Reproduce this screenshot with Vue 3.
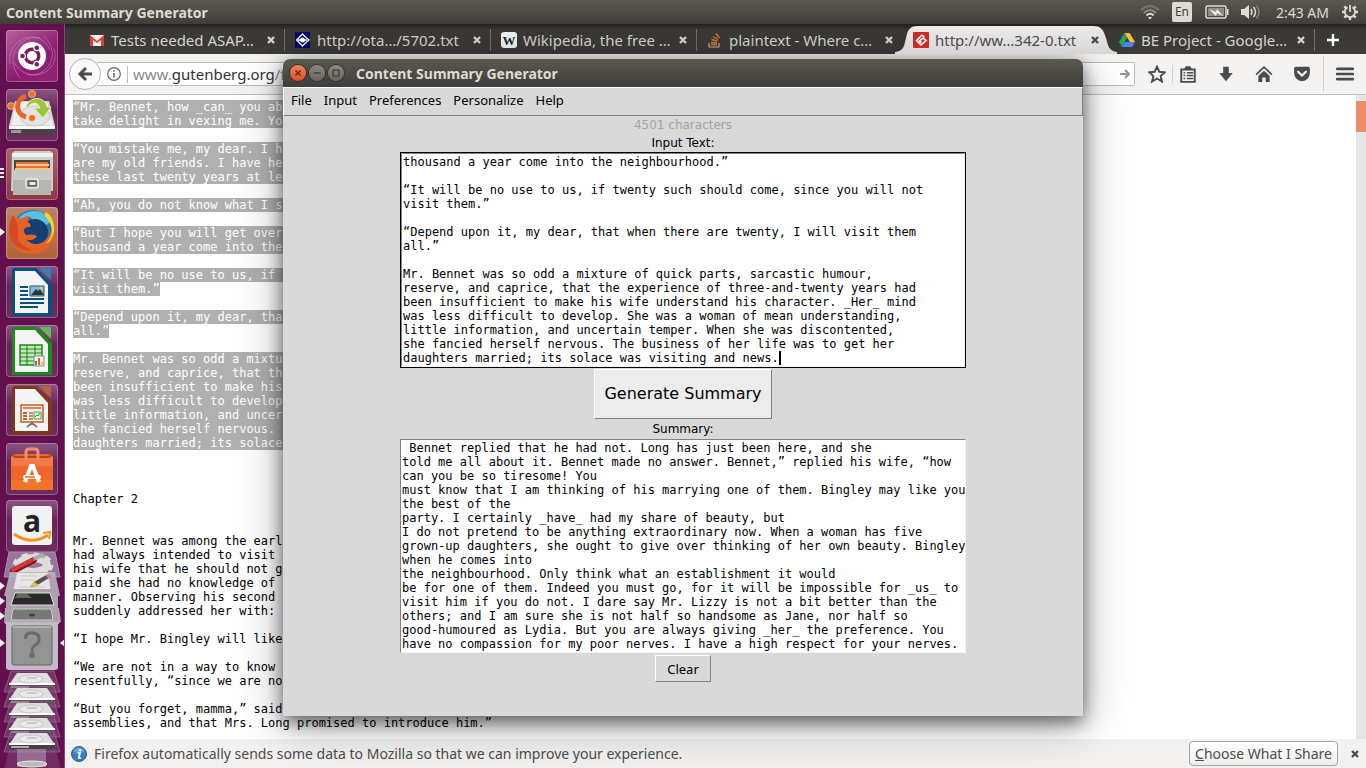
<script setup>
import { ref } from 'vue'

const tabs = [
  { icon: 'mail', title: 'Tests needed ASAP…' },
  { icon: 'ota', title: 'http://ota…/5702.txt' },
  { icon: 'wiki', title: 'Wikipedia, the free …' },
  { icon: 'stack', title: 'plaintext - Where c…' },
  { icon: 'gut', title: 'http://ww…342-0.txt', active: true },
  { icon: 'drive', title: 'BE Project - Google…' },
]

const menus = ['File', 'Input', 'Preferences', 'Personalize', 'Help']

const selected = `“Mr. Bennet, how _can_ you abu
take delight in vexing me. You

“You mistake me, my dear. I have a high respect for your nerves. They
are my old friends. I have heard you mention them with consideration
these last twenty years at least.”

“Ah, you do not know what I suffer.”

“But I hope you will get over it, and live to see many young men of four
thousand a year come into the neighbourhood.”

“It will be no use to us, if twenty such should come, since you will not
visit them.”

“Depend upon it, my dear, that when there are twenty, I will visit them
all.”

Mr. Bennet was so odd a mixture of quick parts, sarcastic humour,
reserve, and caprice, that the experience of three-and-twenty years had
been insufficient to make his wife understand his character. _Her_ mind
was less difficult to develop. She was a woman of mean understanding,
little information, and uncertain temper. When she was discontented,
she fancied herself nervous. The business of her life was to get her
daughters married; its solace was visiting and news.`.split('\n')

const following = `


Chapter 2


Mr. Bennet was among the earliest of those who waited on Mr. Bingley. He
had always intended to visit him, though to the last always assuring
his wife that he should not go; and till the evening after the visit was
paid she had no knowledge of it. It was then disclosed in the following
manner. Observing his second daughter employed in trimming a hat, he
suddenly addressed her with:

“I hope Mr. Bingley will like it, Lizzy.”

“We are not in a way to know _what_ Mr. Bingley likes,” said her mother
resentfully, “since we are not to visit.”

“But you forget, mamma,” said Elizabeth, “that we shall meet him at the
assemblies, and that Mrs. Long promised to introduce him.”`.split('\n')

const input = ref(selected.slice(10).join('\n'))

const summary = ref(` Bennet replied that he had not. Long has just been here, and she
told me all about it. Bennet made no answer. Bennet,” replied his wife, “how
can you be so tiresome! You
must know that I am thinking of his marrying one of them. Bingley may like you
the best of the
party. I certainly _have_ had my share of beauty, but
I do not pretend to be anything extraordinary now. When a woman has five
grown-up daughters, she ought to give over thinking of her own beauty. Bingley
when he comes into
the neighbourhood. Only think what an establishment it would
be for one of them. Indeed you must go, for it will be impossible for _us_ to
visit him if you do not. I dare say Mr. Lizzy is not a bit better than the
others; and I am sure she is not half so handsome as Jane, nor half so
good-humoured as Lydia. But you are always giving _her_ the preference. You
have no compassion for my poor nerves. I have a high respect for your nerves.`)

const disks = [0, 1, 2, 3, 4]
const teeth = [45, 90, 135, 180, 225, 270, 315]
</script>

<template>
  <div class="desktop">
    <header class="panel">
      <span class="panel-title">Content Summary Generator</span>
      <div class="indicators">
        <svg class="wifi" width="20" height="16" viewBox="0 0 20 16" fill="none" stroke-width="2">
          <path d="M1 6Q10-2 19 6" stroke="#77746c" />
          <path d="M4 9Q10 3 16 9" stroke="#8d8a82" />
          <path d="M6.500 11.500Q10 8 13.500 11.500" stroke="#dfdbd2" />
          <path d="M8 13.500Q10 12 12 13.500L10 15.500Z" fill="#dfdbd2" />
        </svg>
        <span class="lang">En</span>
        <svg class="battery" width="24" height="14" viewBox="0 0 24 14">
          <rect x="1" y="1" width="20" height="12" rx="1.500" fill="none" stroke="#dfdbd2" stroke-width="1.500" />
          <rect x="3" y="3" width="16" height="8" fill="#8f8c85" />
          <path d="M22 4h1.500v6H22z" fill="#dfdbd2" />
          <path d="M4 4l7 3 1-3 6 7-6-3-1 3z" fill="#f4f1ea" />
        </svg>
        <svg class="sound" width="20" height="16" viewBox="0 0 20 16" fill="none">
          <path d="M0 5h3l5-4v14l-5-4H0z" fill="#dfdbd2" />
          <path d="M10 5q2 3 0 6M12.500 3q4 5 0 10" stroke="#dfdbd2" stroke-width="1.500" />
          <path d="M15.500 1.500q5 6.500 0 13" stroke="#85827a" stroke-width="1.500" />
        </svg>
        <span class="clock">2:43 AM</span>
        <svg class="session" width="16" height="16" viewBox="0 0 16 16">
          <g fill="#dfdbd2">
            <rect v-for="t in teeth" :key="t" x="6.800" y="0" width="2.400" height="3.500" :transform="`rotate(${t} 8 8)`" />
          </g>
          <path d="M5.500 3.300a5.200 5.200 0 1 0 5 0M8 1v7" fill="none" stroke="#dfdbd2" stroke-width="1.800" />
        </svg>
      </div>
    </header>

    <div class="workspace">
      <nav class="launcher" aria-label="Launcher">
        <button class="tile dash" aria-label="Search">
          <svg viewBox="0 0 52 52">
            <path d="M4 34C0 8 34-4 44 20M48 18C56 44 20 56 8 32M14 48C-4 26 16 4 34 8M38 6c20 20 0 44-18 38" fill="none" stroke="#c98abb" stroke-opacity=".55" />
            <circle cx="26" cy="26" r="14" fill="#fff" />
            <circle cx="26" cy="26" r="6.800" fill="none" stroke="#762057" stroke-width="3.400" />
            <g stroke="#fff" stroke-width="1.200" fill="#762057">
              <circle cx="16.500" cy="26" r="2.900" /><circle cx="30.800" cy="17.700" r="2.900" /><circle cx="30.800" cy="34.300" r="2.900" />
            </g>
          </svg>
        </button>
        <button class="tile install" aria-label="Install Ubuntu">
          <svg viewBox="0 0 52 52">
            <path d="M9 12h34l6 25v8H3v-8z" fill="#d5d5d5" />
            <path d="M11 13h30l6 23H5z" fill="#eee" />
            <path d="M3 37h46v4H3z" fill="#fafafa" /><path d="M3 40h46v5H3z" fill="#444" /><path d="M5 41h10v3H5z" fill="#999" />
            <ellipse cx="29" cy="27" rx="15" ry="10" fill="#e2e2e2" stroke="#c6c6c6" />
            <path d="M20 7A12 11 0 0 0 20 28" fill="none" stroke="#e8622a" stroke-width="5" />
            <g fill="#f4701f" stroke="#fff" stroke-opacity=".5"><circle cx="26" cy="5" r="3.500" /><circle cx="5" cy="17" r="3.500" /><circle cx="26" cy="29" r="3.500" /></g>
            <path d="M20 17C26 5 40 9 41 18h4l-8 11-9-10h6c-2-6-8-7-13 0z" fill="#9bc53d" stroke="#e4f1b5" />
          </svg>
        </button>
        <button class="tile files" aria-label="Files">
          <i class="pips"></i>
          <svg viewBox="0 0 52 52">
            <path d="M6 5l3-2h35l3 2v38H5z" fill="#cfcfcb" /><path d="M6 5h41v4H6z" fill="#efefec" />
            <path d="M8 12h36v12H8z" fill="#474747" />
            <path d="M10 14h32v10H10z" fill="#e0762f" /><path d="M10 16h33v2H10zM9 20h35v2H9z" fill="#f8c291" />
            <path d="M7 22h38v25H7z" fill="#b5b5b1" /><path d="M7 22h38v10H7z" fill="#c9c9c5" />
            <rect x="20" y="31" width="12" height="9" rx="2" fill="#888" stroke="#eee" stroke-width="1.500" /><rect x="23" y="33.500" width="7" height="4" fill="#eee" stroke="#555" />
          </svg>
        </button>
        <button class="tile firefox" aria-label="Firefox">
          <i class="arrow"></i>
          <svg viewBox="0 0 52 52">
            <circle cx="27" cy="23" r="20" fill="#2877b5" />
            <path d="M12 12C20 1 38 1 45 14L36 22 24 10z" fill="#5cc0e6" />
            <circle cx="29" cy="25" r="13" fill="#173e70" />
            <path d="M7 8C2 18 3 26 5 33c5 15 26 19 37 7 7-7 9-20 4-28 0 5 1 10-3 17-5 9-17 11-23 3 4 3 8 0 11-2 0-3-7-3-11-2-4-4-2-8 3-8 2 0 2-3 0-4-3-1 1-4 0-7-4 0-7 3-8 3-4-1-6-2-8-4z" fill="#e66328" />
            <path d="M39 9c9 9 9 19 1 28 8-4 11-17 5-27-2-3-4-4-6-5z" fill="#fbd21f" />
            <path d="M7 8c-4 8-5 17-2 25 5 8 11 11 22 10-11-4-17-8-15-19l-1-9z" fill="#d84a22" />
          </svg>
        </button>
        <button class="tile" aria-label="LibreOffice Writer">
          <svg viewBox="0 0 52 52">
            <path d="M8 2h22l16 16v32H6V4z" fill="#075180" /><path d="M9 5h20l13 14v28H9z" fill="#f5f5f5" /><path d="M33 2h12v12z" fill="#397fa9" />
            <path d="M14 21h8M14 25h8M14 29h8M14 33h24M14 37h24M14 41h18" stroke="#075180" stroke-width="2" />
            <path d="M24 20h14v10H24z" fill="#80bee0" stroke="#195b7d" /><path d="M25 29l5-6 2 2 2-2 4 6z" fill="#333" /><circle cx="35" cy="22" r="1.500" fill="#ffc43a" />
          </svg>
        </button>
        <button class="tile" aria-label="LibreOffice Calc">
          <svg viewBox="0 0 52 52">
            <path d="M8 2h22l16 16v32H6V4z" fill="#1b8c17" /><path d="M9 5h20l13 14v28H9z" fill="#f5f5f5" /><path d="M33 2h12v12z" fill="#63b95b" />
            <path d="M14 20h22v20H14z" fill="#c5e6bf" stroke="#1b8c17" stroke-width="1.500" /><path d="M14 24h22M14 28h22M14 32h22M14 36h22M21 20v20M29 20v20" stroke="#1b8c17" />
            <path d="M28 31h10v10H28z" fill="#f4f4f4" stroke="#888" /><path d="M29 36h2v4h-2z" fill="#3089ba" /><path d="M32 33h2v7h-2z" fill="#dd6324" /><path d="M35 37h2v3h-2z" fill="#efc52a" />
          </svg>
        </button>
        <button class="tile" aria-label="LibreOffice Impress">
          <svg viewBox="0 0 52 52">
            <path d="M8 2h22l16 16v32H6V4z" fill="#803717" /><path d="M9 5h20l13 14v28H9z" fill="#f5f5f5" /><path d="M33 2h12v12z" fill="#b7643b" />
            <path d="M15 21h22v17H15z" fill="#faf2ea" stroke="#c65c23" stroke-width="1.500" /><path d="M17 24h18" stroke="#d98655" stroke-width="2" />
            <path d="M17 29h4M17 32h4M17 35h4" stroke="#8c3b18" stroke-width="1.500" /><path d="M23 29h4M23 32h4M23 35h4" stroke="#c65c23" stroke-width="1.500" />
            <path d="M28 28h7v7h-7z" fill="#eaf6ec" stroke="#41a04d" /><path d="M29 33l2-2 1 1 2-3" fill="none" stroke="#319b3d" /><path d="M21 43l5-4 5 4M26 38v3" fill="none" stroke="#777" stroke-width="2" />
          </svg>
        </button>
        <button class="tile" aria-label="Ubuntu Software">
          <svg viewBox="0 0 52 52">
            <path d="M5 14l3-3h36l3 3v33H5z" fill="#ed672c" /><path d="M5 14h42v9H5z" fill="#f17a45" /><path d="M5 37h42v10H5z" fill="#f47528" /><path d="M7 11l2 3h34l2-3" fill="none" stroke="#b74319" stroke-width="2" />
            <path d="M20 17V9q0-3 3-3h6q3 0 3 3v8" fill="none" stroke="#f58c68" stroke-width="3" />
            <path d="M19 39l6-16h2l6 16" fill="none" stroke="#fff" stroke-width="4" /><path d="M19 34h14" stroke="#fff" stroke-width="4" stroke-linecap="round" /><path d="M19 34h10" stroke="#ed672c" stroke-width="1.500" />
          </svg>
        </button>
        <button class="tile amazon" aria-label="Amazon">
          <svg viewBox="0 0 52 52">
            <rect x="6" y="6" width="40" height="39" rx="3" fill="#f3f3f3" />
            <text x="26" y="32" text-anchor="middle" class="amazon-a">a</text>
            <path d="M8 34q17 12 34 1" fill="none" stroke="#f7941d" stroke-width="3" /><path d="M37 33l7-1-1 7" fill="none" stroke="#f7941d" stroke-width="2" />
          </svg>
        </button>
        <svg class="folded" viewBox="0 0 65 217" role="img" aria-label="More applications">
          <path d="M9 0h46l5 25H4z" fill="#96769a" stroke="#b18bae" />
          <g transform="translate(33 13)"><ellipse rx="14" ry="7" fill="none" stroke="#ddd" stroke-width="8" /><ellipse rx="19" ry="11" fill="none" stroke="#ddd" stroke-width="3" stroke-dasharray="6 6" /></g>
          <path d="M13 19L34 8" stroke="#811" stroke-width="6" stroke-linecap="round" /><path d="M13 18L34 7" stroke="#d53a37" stroke-width="4" stroke-linecap="round" /><path d="M34 7l8-4 3 2" stroke="#aaa" stroke-width="4" fill="none" />
          <path d="M10 20h45l5 24H4z" fill="#b9b3bb" fill-opacity=".9" /><path d="M17 21h31l3 19H13z" fill="#e6e6e6" /><path d="M21 24h16M20 28h15M18 35h28" stroke="#c9c9c9" />
          <path d="M30 35l4-5 12-7 3 3-13 8z" fill="#555" /><path d="M30 35l4-5 5 3-9 2z" fill="#e5c93d" /><path d="M45 23l3-1 4 2-3 3z" fill="#d17aa5" />
          <path d="M6 40l4-3h43l5 3v17H6z" fill="#aaa2ac" /><path d="M15 41h35l4 12H11z" fill="#292929" stroke="#ddd" /><path d="M17 42h10l5 4H15z" fill="#666" />
          <path d="M5 56h54l2 14H4z" fill="#aaa2ac" /><path d="M13 57h38l2 11H11z" fill="#777" stroke="#ccc" /><ellipse cx="32" cy="63" rx="3" ry="1.500" fill="#444" />
          <path d="M4 70h56l-3 4H7z" fill="#c8c1ca" /><rect x="6" y="70" width="52" height="48" rx="3" fill="#c2bac5" /><rect x="12" y="74" width="40" height="39" rx="2" fill="#949494" stroke="#666" /><path d="M13 75h38" stroke="#d5d5d5" />
          <path d="M25 87q1-7 8-6 7 1 6 7 0 3-5 6-2 2-2 6" fill="none" stroke="#6a6a6a" stroke-width="3" /><circle cx="32" cy="103" r="2.800" fill="#6a6a6a" />
          <g v-for="d in disks" :key="d" :transform="`translate(0 ${d * 15})`">
            <path d="M11 119h43l6 21H4z" fill="#8b5681" fill-opacity=".5" stroke="#9e6b95" stroke-opacity=".7" />
            <path d="M17 121h30l8 12H9z" fill="#dedede" /><path d="M9 132h46v5H9z" fill="#414141" /><path d="M9 131h46v2H9z" fill="#fff" /><path d="M11 134h18v2H11z" fill="#aaa" />
            <ellipse cx="31" cy="127" rx="12" ry="4" fill="#e9e9e9" stroke="#c6c6c6" /><path d="M27 126h10" stroke="#aaa" />
          </g>
          <path d="M9 198h47l5 19H4z" fill="#8b5681" fill-opacity=".4" /><path d="M17 197h29v18H17z" fill="#bda9bc" fill-opacity=".5" /><ellipse cx="32" cy="212" rx="15" ry="3" fill="#bbb" stroke="#eee" />
          <path d="M0 30l5 4-5 4zM0 45l5 4-5 4zM0 60l5 4-5 4zM0 87l5 4-5 4zM65 87l-5 4 5 4z" fill="#eee" />
        </svg>
      </nav>

      <main class="browser">
        <div class="tabs" role="tablist">
          <div v-for="t in tabs" :key="t.title" class="tab" :class="{ active: t.active }" role="tab">
            <svg v-if="t.active" class="shape" viewBox="0 0 222 30" preserveAspectRatio="none">
              <defs><linearGradient id="tabfill" x2="0" y2="1"><stop offset="0" stop-color="#ecebea" /><stop offset="1" stop-color="#d7d6d5" /></linearGradient></defs>
              <path d="M0 30V28C9 27 9 22 11 14C13 5 15 2 23 2H198C206 2 208 5 211 14C213 22 214 27 222 28V30Z" fill="url(#tabfill)" />
            </svg>
            <svg class="favicon" viewBox="0 0 16 16">
              <template v-if="t.icon === 'mail'"><path d="M1 3h14v11H1z" fill="#eee" /><path d="M1 3l7 6 7-6v11h-3V8l-4 3-4-3v6H1z" fill="#d5423a" /></template>
              <template v-else-if="t.icon === 'ota'"><path d="M0 0h15v16H0z" fill="#000060" /><path d="M11 5.500L7.500 2 1.500 8l6 6L11 10.500M3 8h9M11 5.500L14 8l-3 2.500" fill="none" stroke="#fff" stroke-width="1.300" /><circle cx="7.500" cy="8" r="2.500" fill="#fff" /></template>
              <template v-else-if="t.icon === 'wiki'"><rect width="16" height="16" rx="3" fill="#f2f2f2" /><text x="8" y="13" text-anchor="middle" class="wiki-w">W</text></template>
              <template v-else-if="t.icon === 'stack'"><path d="M2 11v4h10v-4" fill="none" stroke="#b4b0a9" stroke-width="1.200" /><path d="M4 12.500h6M4 10.300l6 .6M4.500 7.500l6 1.700M6 4.500l5 3M9 1.500l3.500 4.500" stroke="#e87722" stroke-width="1.300" /></template>
              <template v-else-if="t.icon === 'gut'"><rect width="16" height="16" rx="1" fill="#cc2b22" /><path d="M9 3L3.500 8.500 8 13l5-4.500L10 6 6.500 9l2 1.500M9 3l2.500 2" fill="none" stroke="#fff" stroke-width="1.600" /></template>
              <template v-else><path d="M5.500 1h5L16 10h-5z" fill="#fbc02d" /><path d="M5.500 1L8 5.500 3 15 0 10z" fill="#21a464" /><path d="M5.500 10H16l-3 5H3z" fill="#4285f4" /></template>
            </svg>
            <span class="tab-title">{{ t.title }}</span>
            <button class="close" aria-label="Close tab"><svg viewBox="0 0 8 8"><path d="M1 1l6 6M7 1L1 7" stroke="currentColor" stroke-width="2.400" /></svg></button>
          </div>
          <button class="new-tab" aria-label="New tab"><svg viewBox="0 0 12 12"><path d="M0 6h12M6 0v12" stroke="#fff" stroke-width="2.400" /></svg></button>
        </div>

        <div class="toolbar">
          <button class="back" aria-label="Back"><svg viewBox="0 0 16 16"><path d="M9 2L3 8l6 6M3 8h12" fill="none" stroke="#4b4b4b" stroke-width="3" /></svg></button>
          <div class="urlbar">
            <svg class="info-outline" viewBox="0 0 14 14"><circle cx="7" cy="7" r="6.300" fill="none" stroke="#666" stroke-width="1.200" /><path d="M7 6v4.500M7 3.300v1.500" stroke="#666" stroke-width="1.600" /></svg>
            <span class="url"><i>www.</i>gutenberg.org<i>/f</i></span>
            <svg class="go" viewBox="0 0 10 10"><path d="M0 5h8M5 1l4 4-4 4" fill="none" stroke="#8996a3" stroke-width="2" /></svg>
          </div>
          <button class="tool star" aria-label="Bookmark"><svg viewBox="0 0 16 16"><path d="M8 1.500l2 4.500 5 .5-3.800 3.300 1.200 4.900L8 12l-4.400 2.700 1.200-4.900L1 6.500 6 6z" fill="none" stroke="#4b4b4b" stroke-width="1.700" /></svg></button>
          <i class="divider"></i>
          <button class="tool list" aria-label="Bookmarks list"><svg viewBox="0 0 16 16"><path d="M2 4h12v11H2z" fill="none" stroke="#4b4b4b" stroke-width="1.700" /><path d="M4.500 3.500L6 1h4l1.500 2.500z" fill="#4b4b4b" /><path d="M4 6.800h1.500M7 6.800h5.500M4 9.400h1.500M7 9.400h5.500M4 12h1.500M7 12h5.500" stroke="#4b4b4b" stroke-width="1.300" /></svg></button>
          <button class="tool" aria-label="Downloads"><svg viewBox="0 0 16 16"><path d="M5.500 1.500h5V7H14l-6 7.500L2 7h3.500z" fill="#4b4b4b" /></svg></button>
          <button class="tool" aria-label="Home"><svg viewBox="0 0 16 16"><path d="M1 8.500L8 2l7 6.500" fill="none" stroke="#4b4b4b" stroke-width="1.500" /><path d="M3 9.500l5-4.500 5 4.500V15H9.500v-4h-3v4H3z" fill="#4b4b4b" /></svg></button>
          <button class="tool" aria-label="Pocket"><svg viewBox="0 0 16 16"><path d="M1.500 1.500h12q1.500 0 1.500 1.500v4A7 7.500 0 0 1 1 7V3q0-1.500 1.500-1.500z" fill="#4b4b4b" /><path d="M4.500 6L8 9.300 11.500 6" fill="none" stroke="#f4f3f1" stroke-width="2" stroke-linecap="round" /></svg></button>
          <i class="divider tall"></i>
          <button class="tool burger" aria-label="Menu"><svg viewBox="0 0 16 16"><path d="M1 3.500h14M1 8h14M1 12.500h14" stroke="#4b4b4b" stroke-width="2.400" stroke-linecap="round" /></svg></button>
        </div>

        <div class="page">
          <div class="document">
            <p v-for="(l, n) in selected" :key="'s' + n"><mark>{{ l }}</mark></p>
            <p v-for="(l, n) in following" :key="'f' + n">{{ l }}</p>
          </div>
          <div class="scrollbar"><div class="thumb"></div></div>
        </div>

        <footer class="notice">
          <svg class="info-blue" viewBox="0 0 16 16"><circle cx="8" cy="8" r="7.500" fill="#3c7fba" stroke="#285f92" /><path d="M2.500 6a5.600 5.600 0 0 1 11 0q-5 2-11 0z" fill="#85b6df" fill-opacity=".6" /><circle cx="9" cy="4.200" r="1.300" fill="#fff" /><path d="M6.500 7H9l-1.200 5H10" fill="none" stroke="#fff" stroke-width="1.600" /></svg>
          <span>Firefox automatically sends some data to Mozilla so that we can improve your experience.</span>
          <button class="share"><u>C</u>hoose What I Share</button>
          <button class="close" aria-label="Dismiss"><svg viewBox="0 0 8 8"><path d="M1 1l6 6M7 1L1 7" stroke="currentColor" stroke-width="2.400" /></svg></button>
        </footer>
      </main>
    </div>

    <section class="window" aria-label="Content Summary Generator">
      <header class="titlebar">
        <button class="ctl ctl-close" aria-label="Close"><svg viewBox="0 0 16 16"><path d="M5.500 5.500l5 5M10.500 5.500l-5 5" stroke="#59241a" stroke-width="1.300" /></svg></button>
        <button class="ctl" aria-label="Minimize"><svg viewBox="0 0 16 16"><path d="M4.500 8h7" stroke="#3a3935" stroke-width="1.200" /></svg></button>
        <button class="ctl" aria-label="Maximize"><svg viewBox="0 0 16 16"><path d="M5 5h6v6H5z" fill="none" stroke="#3a3935" stroke-width="1.200" /></svg></button>
        <h1>Content Summary Generator</h1>
      </header>
      <nav class="menubar"><button v-for="m in menus" :key="m">{{ m }}</button></nav>
      <div class="content">
        <output class="count">4501 characters</output>
        <label for="source">Input Text:</label>
        <div class="source"><textarea id="source" v-model="input" wrap="off" spellcheck="false"></textarea><span class="caret"></span></div>
        <button class="generate">Generate Summary</button>
        <label for="summary">Summary:</label>
        <textarea id="summary" v-model="summary" class="summary" wrap="off" spellcheck="false"></textarea>
        <button class="clear">Clear</button>
      </div>
    </section>
  </div>
</template>

<style>
body { margin: 0; overflow: hidden; }
</style>

<style scoped>
* { box-sizing: border-box; }
button { margin: 0; padding: 0; border: 0; background: none; font: inherit; color: inherit; }
svg { display: block; }
.desktop { position: relative; display: flex; flex-direction: column; height: 100vh; overflow: hidden; font: 14px "Noto Sans", "Open Sans", sans-serif; background: #fff; }
.panel { flex: none; display: flex; align-items: center; justify-content: space-between; height: 24px; padding: 0 8px 0 6px; color: #dfdbd2; background: linear-gradient(#5b594f, #3f3e39); }
.panel-title { font-size: 14px; font-weight: 700; }
.indicators { display: flex; align-items: center; }
.lang { margin: 0 13px 0 12px; width: 20px; height: 20px; border-radius: 2px; font-size: 12px; line-height: 20px; text-align: center; color: #403f3a; background: #dfdbd2; }
.sound { margin: 0 15px 0 12px; }
.session { margin-left: 13px; }
.workspace { flex: 1; display: flex; min-height: 0; }

.launcher { flex: none; width: 65px; padding-top: 6px; overflow: hidden; display: flex; flex-direction: column; align-items: center; gap: 7px; border-right: 1px solid #84477a; background: #63104f; }
.tile { position: relative; flex: none; width: 52px; height: 52px; margin-right: 1px; border-radius: 4px; background: linear-gradient(#8c5583, #662557 40%, #6d2e5f); box-shadow: inset 0 0 0 1px rgba(255, 255, 255, .25); }
.dash { background: linear-gradient(145deg, #b5639d, #8b1c6d 60%, #96267b); }
.files { background: linear-gradient(#a5636b, #8f3644); }
.firefox { background: linear-gradient(#bb8468, #ae6339); }
.amazon { margin-top: -2px; }
.amazon-a { font: 700 30px "Open Sans", sans-serif; fill: #222; }
.arrow { position: absolute; left: -6px; top: 21px; border: 4px solid transparent; border-left: 5px solid #eee; border-right: 0; }
.pips { position: absolute; left: -6px; top: 20px; width: 4px; height: 11px; background: repeating-linear-gradient(#eee 0 2px, transparent 2px 4px); }
.folded { flex: none; width: 65px; height: 217px; margin-top: -7px; }

.browser { flex: 1; min-width: 0; display: flex; flex-direction: column; }
.tabs { flex: none; display: flex; height: 30px; padding-left: 14px; color: #d6d3cc; background: linear-gradient(#21201d, #3a3935 6px, #3c3b37); }
.tab { position: relative; flex: 0 1 206px; min-width: 0; display: flex; align-items: center; gap: 6px; padding: 2px 10px 0; font-size: 15px; }
.tab::after { content: ""; position: absolute; right: 0; top: 5px; bottom: 3px; width: 1px; background: #72706a; }
.tab:has(+ .active)::after, .tab.active::after { display: none; }
.tab.active { z-index: 1; color: #4c4c4c; }
.shape { position: absolute; left: -8px; right: -8px; top: 0; width: 222px; height: 30px; }
.favicon { position: relative; flex: none; width: 16px; height: 16px; }
.wiki-w { font: 700 13px "Liberation Serif", serif; fill: #222; }
.tab-title { position: relative; flex: 1; min-width: 0; overflow: hidden; white-space: nowrap; }
.close { position: relative; flex: none; width: 8px; height: 8px; }
.new-tab { margin: 2px 0 0 12px; width: 12px; }

.toolbar { flex: none; display: flex; align-items: center; height: 41px; padding: 0 12px 0 4px; color: #4b4b4b; border-bottom: 1px solid #c2c1bf; background: #f4f3f1; }
.back { position: relative; flex: none; display: grid; place-items: center; width: 32px; height: 32px; border: 1px solid #b7b5b2; border-radius: 50%; background: #fafafa; }
.back svg { width: 16px; }
.urlbar { flex: 1; min-width: 0; display: flex; align-items: center; height: 24px; margin-left: -4px; padding: 0 4px 0 10px; border: 1px solid #bebcb9; border-left: 0; border-radius: 0 2px 2px 0; background: #fff; }
.info-outline { width: 14px; margin-right: 6px; }
.url { flex: 1; padding-left: 5px; border-left: 1px solid #bbb; font-size: 15px; line-height: 17px; color: #333; }
.url i { font-style: normal; color: #8a8a8a; }
.go { width: 10px; }
.tool { flex: none; width: 18px; margin-left: 20px; }
.tool.star { margin-left: 13px; }
.divider { width: 1px; height: 18px; margin: 0 6px; background: #d2d1cf; }
.divider.tall { height: 36px; margin: 0 12px; }
.tool.list, .tool.burger { margin-left: 0; }

.page { flex: 1; display: flex; min-height: 0; }
.document { flex: 1; padding: 5px 8px; overflow: hidden; white-space: pre; color: #000; font: 12px/14px "DejaVu Sans Mono", monospace; }
.document p { height: 14px; margin: 0; }
.document mark { display: inline-block; height: 14px; color: #fff; background: #b0b0b0; }
.scrollbar { width: 10px; padding-top: 6px; background: #e5e5e5; }
.thumb { height: 31px; background: #f08b67; }
.notice { flex: none; display: flex; align-items: center; height: 29px; padding: 0 7px 0 6px; color: #4c4c4c; background: #f2f1f0; }
.info-blue { width: 16px; margin-right: 7px; }
.share { margin: 0 13px 0 auto; padding: 0 5px; height: 25px; border: 1px solid #a5a4a2; border-radius: 4px; background: linear-gradient(#fff, #ededec); }

.window { position: absolute; left: 283px; top: 59px; width: 800px; height: 657px; display: flex; flex-direction: column; color: #000; background: #d9d9d9; border-radius: 7px 7px 0 0; box-shadow: 0 6px 18px rgba(0, 0, 0, .55), 0 8px 48px rgba(0, 0, 0, .3); }
.titlebar { flex: none; display: flex; align-items: center; gap: 3px; height: 28px; padding-left: 7px; border-radius: 7px 7px 0 0; color: #dfdbd2; background: linear-gradient(#5b594f, #3f3e39); }
.titlebar h1 { margin: 0 0 0 9px; font-size: 14px; }
.ctl { width: 16px; height: 16px; border-radius: 50%; background: linear-gradient(#8b8981, #66645e); box-shadow: 0 0 0 1px #33322e; }
.ctl-close { background: linear-gradient(#f5805a, #dd4f26); }
.menubar { flex: none; display: flex; align-items: center; gap: 12px; height: 29px; padding: 0 7px 4px; border: 1px solid #fff; border-right-color: #828282; border-bottom-color: #828282; font: 13px/18px "Noto Sans", sans-serif; }
.content { display: flex; flex-direction: column; align-items: center; font: 12px/18px "DejaVu Sans", sans-serif; }
.count { color: #a3a3a3; }
textarea { display: block; width: 564px; height: 214px; margin: 0; padding: 1px; resize: none; overflow: hidden; border: 1px solid #828282; border-right-color: #f4f4f4; border-bottom-color: #f4f4f4; border-radius: 0; outline: 0; background: #fff; color: #000; font: 12px/14px "DejaVu Sans Mono", monospace; white-space: pre; }
.source { position: relative; border: 1px solid #000; font: 12px/14px "DejaVu Sans Mono", monospace; }
.caret { position: absolute; left: calc(2px + 52ch); bottom: 2px; width: 2px; height: 14px; background: #000; }
.summary { width: 566px; margin-top: 1px; padding-right: 0; }
.generate { height: 50px; margin: 1px 0; padding: 0 9px; border: 1px solid #fff; border-right-color: #828282; border-bottom-color: #828282; background: #ececec; font-size: 16px; }
.clear { width: 56px; height: 27px; margin-top: 2px; border: 1px solid #fff; border-right-color: #828282; border-bottom-color: #828282; background: #d9d9d9; font: 13px "Noto Sans", sans-serif; }
</style>
